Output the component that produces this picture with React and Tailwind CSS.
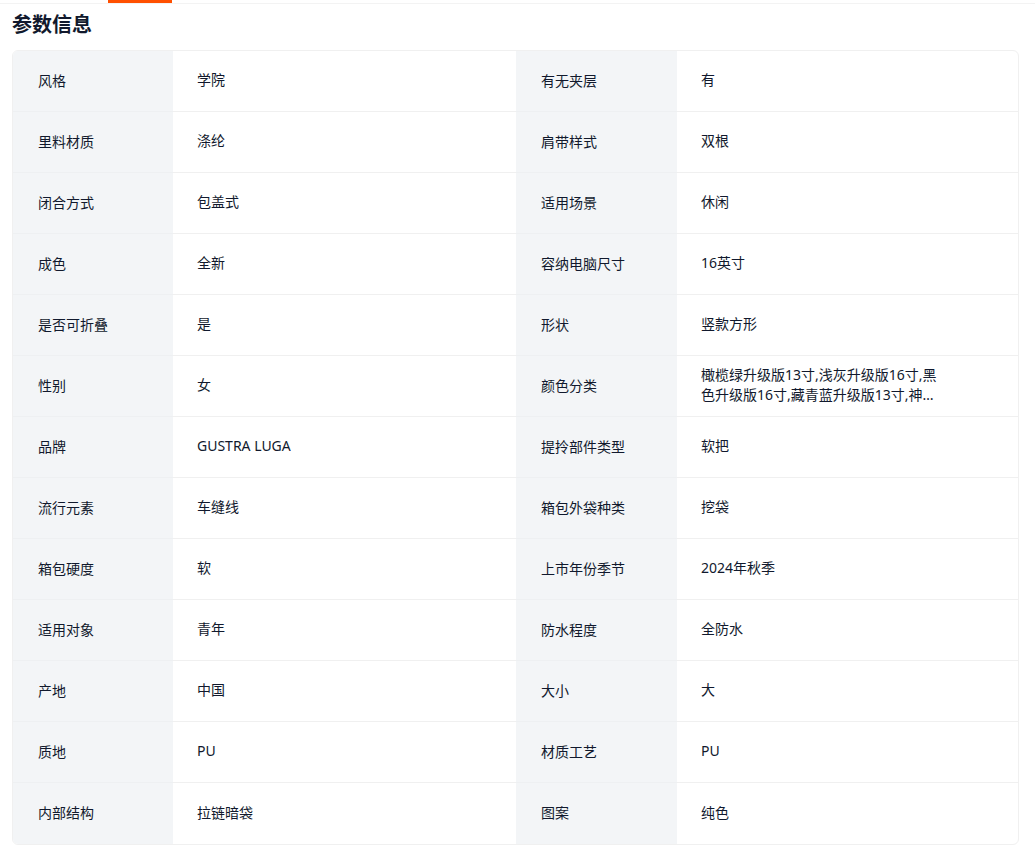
const rows = [
  ["风格", "学院", "有无夹层", "有"],
  ["里料材质", "涤纶", "肩带样式", "双根"],
  ["闭合方式", "包盖式", "适用场景", "休闲"],
  ["成色", "全新", "容纳电脑尺寸", "16英寸"],
  ["是否可折叠", "是", "形状", "竖款方形"],
  ["性别", "女", "颜色分类", "橄榄绿升级版13寸,浅灰升级版16寸,黑色升级版16寸,藏青蓝升级版13寸,神秘紫升级版13寸,奶白升级版16寸"],
  ["品牌", "GUSTRA LUGA", "提拎部件类型", "软把"],
  ["流行元素", "车缝线", "箱包外袋种类", "挖袋"],
  ["箱包硬度", "软", "上市年份季节", "2024年秋季"],
  ["适用对象", "青年", "防水程度", "全防水"],
  ["产地", "中国", "大小", "大"],
  ["质地", "PU", "材质工艺", "PU"],
  ["内部结构", "拉链暗袋", "图案", "纯色"],
];

function Label({ children, last }) {
  return (
    <div className={`flex items-center bg-[#f3f5f7] pb-[2px] pl-[25px] ${last ? "" : "border-b border-[#eef0f2]"}`}>
      {children}
    </div>
  );
}

function Value({ children, last }) {
  return (
    <div className={`flex items-center pb-[2px] pl-6 pr-4 ${last ? "" : "border-b border-[#f0f0f0]"}`}>
      <span className="line-clamp-2 max-w-[240px] break-all leading-5">{children}</span>
    </div>
  );
}

export default function App() {
  return (
    <div className="min-h-[849px] bg-white font-['Noto_Sans','Noto_Sans_CJK_SC',sans-serif] text-[#11192d]">
      <div className="h-[4px] border-b border-[#f3f3f3]">
        <div className="ml-[108px] h-[3px] w-[64px] bg-[#ff5000]" />
      </div>
      <h2 className="pl-3 pt-[9px] pb-[13px] text-[20px] font-bold leading-6 text-[#11192d]">参数信息</h2>
      <div className="ml-3 mr-4 overflow-hidden rounded-md border border-[#f0f0f0] text-[14px]">
        {rows.map((r, i) => {
          const last = i === rows.length - 1;
          return (
            <div key={i} className="grid h-[61px] grid-cols-[160px_343px_161px_1fr]">
              <Label last={last}>{r[0]}</Label>
              <Value last={last}>{r[1]}</Value>
              <Label last={last}>{r[2]}</Label>
              <Value last={last}>{r[3]}</Value>
            </div>
          );
        })}
      </div>
    </div>
  );
}
